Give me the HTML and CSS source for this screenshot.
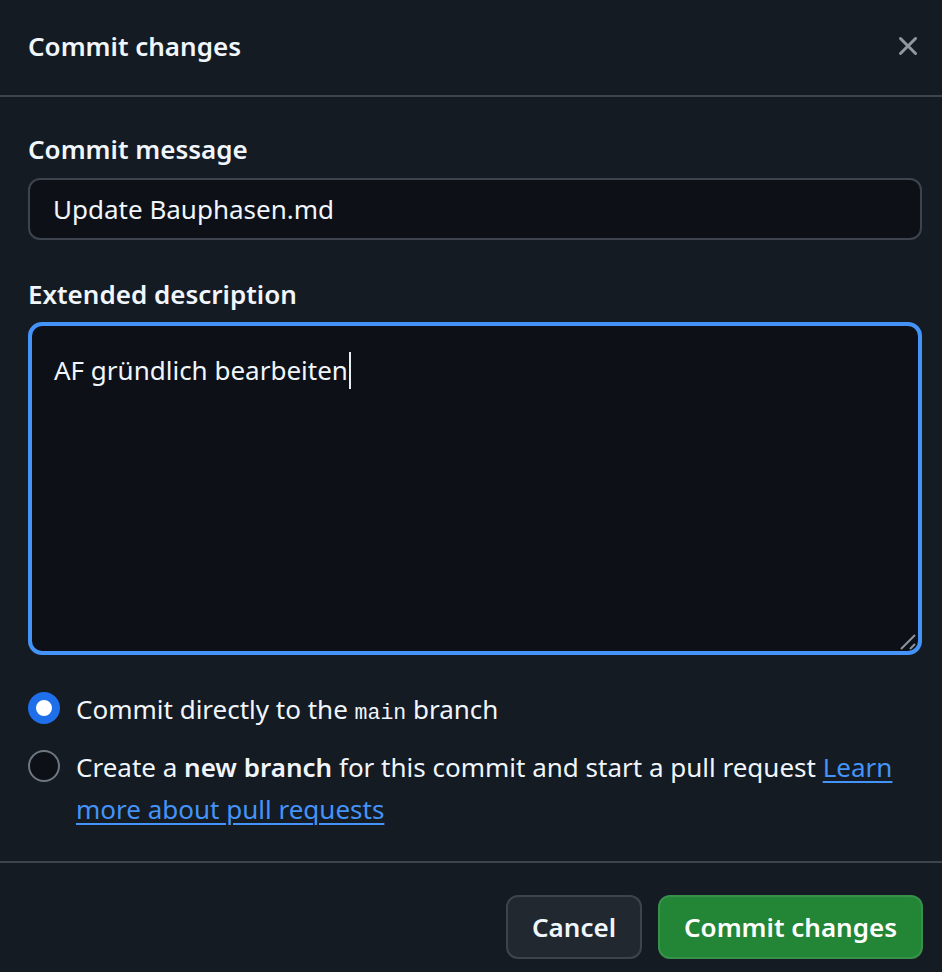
FILE: index.html
```html
<!DOCTYPE html>
<html lang="de">
<head>
<meta charset="utf-8">
<title>Commit changes</title>
<link rel="stylesheet" href="styles.css">
</head>
<body>
<div class="dialog">
  <header class="dialog-header">
    <h1 class="dialog-title">Commit changes</h1>
    <button class="close-btn" aria-label="Close">
      <svg width="32" height="32" viewBox="0 0 16 16" aria-hidden="true"><path fill="currentColor" d="M3.72 3.72a.75.75 0 0 1 1.06 0L8 6.940l3.22-3.22a.749.749 0 0 1 1.275.326.749.749 0 0 1-.215.734L9.06 8l3.22 3.22a.749.749 0 0 1-.326 1.275.749.749 0 0 1-.734-.215L8 9.06l-3.22 3.22a.751.751 0 0 1-1.042-.018.751.751 0 0 1-.018-1.042L6.94 8 3.72 4.78a.75.75 0 0 1 0-1.06Z"/></svg>
    </button>
  </header>
  <div class="dialog-body">
    <div class="field-label">Commit message</div>
    <div class="text-input">Update Bauphasen.md</div>
    <div class="field-label field-label-spaced">Extended description</div>
    <div class="textarea">
      <span class="textarea-text">AF gründlich bearbeiten</span><span class="caret"></span>
      <svg class="resize-grip" width="18" height="18" viewBox="0 0 18 18" aria-hidden="true"><path d="M2 16 L16 2 M11 16 L16 11" stroke="#8b949e" stroke-width="2" fill="none"/></svg>
    </div>
    <div class="radio-group">
      <div class="radio-row">
        <span class="radio radio-checked"></span>
        <span class="radio-label">Commit directly to the <code class="mono">main</code> branch</span>
      </div>
      <div class="radio-row">
        <span class="radio"></span>
        <span class="radio-label">Create a <strong>new branch</strong> for this commit and start a pull request <a class="link" href="#">Learn more about pull requests</a></span>
      </div>
    </div>
  </div>
  <footer class="dialog-footer">
    <button class="btn btn-default">Cancel</button>
    <button class="btn btn-primary">Commit changes</button>
  </footer>
</div>
</body>
</html>
```

FILE: styles.css
```css
* { box-sizing: border-box; }

html, body {
  margin: 0;
  padding: 0;
  background: #151b23;
}

body {
  font-family: "Noto Sans", "Open Sans", sans-serif;
  font-size: 26px;
  line-height: 42px;
  color: #f0f6fc;
}

.dialog {
  width: 942px;
  height: 972px;
  background: #151b23;
  display: flex;
  flex-direction: column;
}

.dialog-header {
  height: 97px;
  flex: none;
  border-bottom: 2px solid #3d444d;
  display: flex;
  align-items: center;
  justify-content: space-between;
  padding: 0 18px 3px 28px;
}

.dialog-title {
  margin: 0;
  font-size: 26px;
  font-weight: 600;
  line-height: 42px;
  color: #f0f6fc;
}

.close-btn {
  width: 32px;
  height: 32px;
  padding: 0;
  border: 0;
  background: transparent;
  color: #9198a1;
  display: flex;
}

.dialog-body {
  padding: 31px 20px 31px 28px;
  display: flex;
  flex-direction: column;
}

.field-label {
  font-weight: 600;
  line-height: 42px;
  margin-bottom: 8px;
  color: #f0f6fc;
}

.field-label-spaced {
  margin-top: 33px;
  margin-bottom: 7px;
}

.text-input {
  height: 62px;
  border: 2px solid #3d444d;
  border-radius: 12px;
  background: #0d1117;
  padding: 0 23px;
  display: flex;
  align-items: center;
  color: #f0f6fc;
}

.textarea {
  position: relative;
  height: 333px;
  border: 4px solid #4493f8;
  border-radius: 14px;
  background: #0d1117;
  padding: 23px 22px;
  color: #f0f6fc;
}

.caret {
  display: inline-block;
  width: 2px;
  height: 37px;
  background: #e6edf3;
  vertical-align: -9px;
  margin-left: 1px;
}

.resize-grip {
  position: absolute;
  right: 1px;
  bottom: 0;
}

.radio-group {
  margin-top: 33px;
  display: flex;
  flex-direction: column;
  gap: 12px;
}

.radio-row {
  display: flex;
  align-items: flex-start;
  gap: 16px;
}

.radio {
  flex: none;
  width: 32px;
  height: 32px;
  margin-top: 4px;
  border-radius: 50%;
  border: 2px solid #6e7681;
  background: #0d1117;
}

.radio-checked {
  border: 8px solid #1f6feb;
  background: #ffffff;
}

.radio-label {
  color: #f0f6fc;
}

.radio-label strong {
  font-weight: 600;
}

.mono {
  font-family: "Liberation Mono", "DejaVu Sans Mono", monospace;
  font-size: 21.5px;
}

.link {
  color: #4493f8;
  text-decoration: underline;
  text-underline-offset: 4px;
  text-decoration-thickness: 2px;
}

.dialog-footer {
  flex: none;
  border-top: 2px solid #3d444d;
  padding: 32px 19px 0 28px;
  display: flex;
  justify-content: flex-end;
  gap: 16px;
}

.btn {
  height: 64px;
  padding: 0 24px;
  border-radius: 12px;
  font-family: "Noto Sans", "Open Sans", sans-serif;
  font-size: 26px;
  font-weight: 600;
  line-height: 42px;
  cursor: pointer;
}

.btn-default {
  background: #212830;
  color: #f0f6fc;
  border: 2px solid #3d444d;
}

.btn-primary {
  background: #238636;
  color: #ffffff;
  border: 2px solid rgba(240, 246, 252, 0.1);
}
```
